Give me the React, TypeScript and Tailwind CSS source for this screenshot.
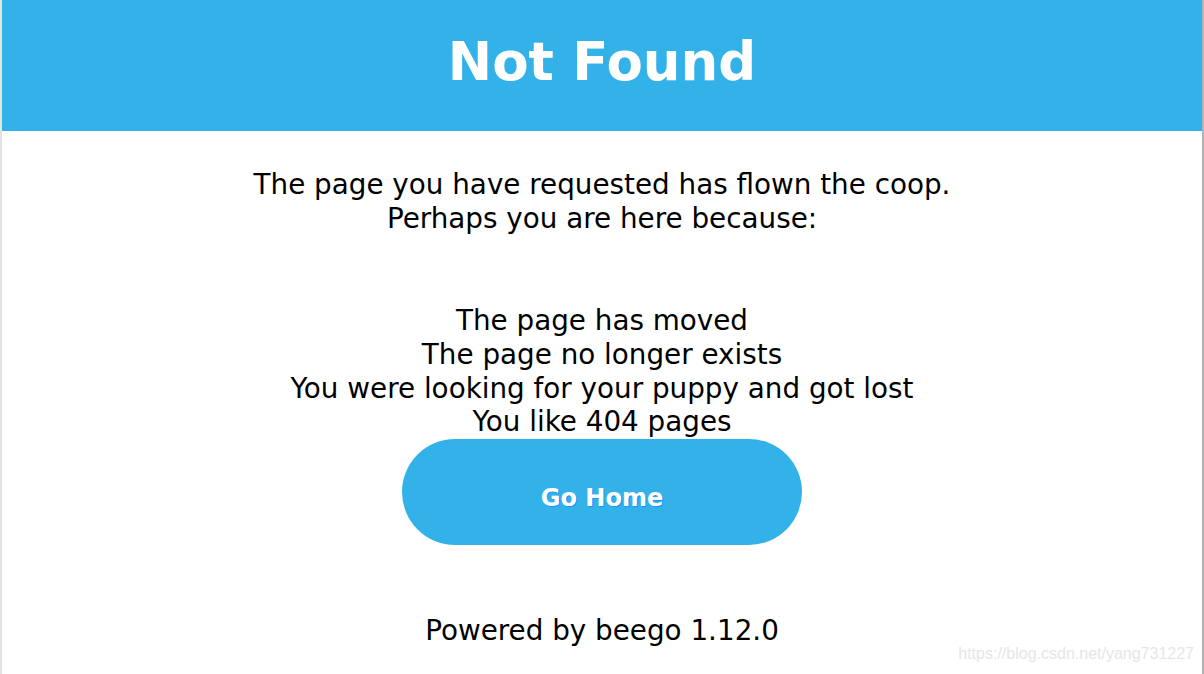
import React from 'react';

const font = { fontFamily: '"DejaVu Sans", Verdana, sans-serif' };

export default function App() {
  const reasons = [
    'The page has moved',
    'The page no longer exists',
    'You were looking for your puppy and got lost',
    'You like 404 pages',
  ];

  return (
    <div
      className="relative min-h-[674px] w-full bg-white border-l-2 border-l-[#e3e3e3] border-r-2 border-r-[#b3b3b3] text-black"
      style={font}
    >
      <header className="h-[131px] bg-[#33b2ea] flex items-center justify-center">
        <h1 className="text-[53px] font-bold text-white leading-none -mt-[9px]">Not Found</h1>
      </header>

      <div className="flex flex-col items-center text-center text-[27.8px] leading-[34px]">
        <p className="mt-[37px]">
          The page you have requested has flown the coop.
          <br />
          Perhaps you are here because:
        </p>

        <ul className="mt-[68px] leading-[33.75px]">
          {reasons.map((r) => (
            <li key={r}>{r}</li>
          ))}
        </ul>

        <a
          href="#"
          className="w-[400px] h-[106px] rounded-full bg-[#33b2ea] flex items-center justify-center pt-[12px] text-white font-bold text-[24px] [text-shadow:1px_1px_0_#1e90ff]"
        >
          Go Home
        </a>

        <p className="mt-[69px]">Powered by beego 1.12.0</p>
      </div>

      <div
        className="absolute right-[8px] bottom-[8px] text-[16px] text-[#e6e6e6]"
        style={{ fontFamily: '"Liberation Sans", Arial, sans-serif' }}
      >
        https://blog.csdn.net/yang731227
      </div>
    </div>
  );
}
